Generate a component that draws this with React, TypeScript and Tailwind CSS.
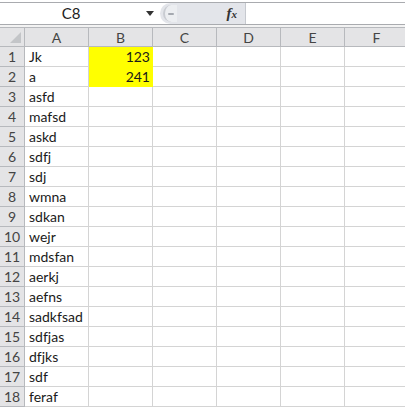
import React from 'react'

const cols = ['A', 'B', 'C', 'D', 'E', 'F']

const rows: { a: string; b?: string }[] = [
  { a: 'Jk', b: '123' },
  { a: 'a', b: '241' },
  { a: 'asfd' },
  { a: 'mafsd' },
  { a: 'askd' },
  { a: 'sdfj' },
  { a: 'sdj' },
  { a: 'wmna' },
  { a: 'sdkan' },
  { a: 'wejr' },
  { a: 'mdsfan' },
  { a: 'aerkj' },
  { a: 'aefns' },
  { a: 'sadkfsad' },
  { a: 'sdfjas' },
  { a: 'dfjks' },
  { a: 'sdf' },
  { a: 'feraf' },
]

const FormulaBar = () => (
  <div className="mt-[2px] flex h-[23px] border-t border-b border-[#a9abaf] bg-white">
    <div className="relative flex w-[160px] items-center justify-center text-[15px] text-[#222]">
      <span className="-ml-[18px]">C8</span>
      <span className="absolute right-[6px] top-[8px] h-0 w-0 border-x-[4px] border-t-[5px] border-x-transparent border-t-[#333]" />
    </div>
    <div className="flex w-[85px] items-center justify-between rounded-l-full bg-[#e3e5ea] pl-[3px] pr-[8px]">
      <span className="flex h-[17px] w-[14px] items-center rounded-l-full border-l-2 border-[#c9ccd2] bg-[#eceef1] pl-[3px]">
        <span className="h-[2px] w-[6px] rounded bg-[#a5a9b0]" />
      </span>
      <span className="font-['Liberation_Serif',serif] text-[15px] font-bold italic text-[#333]">
        f<span className="text-[11px]">x</span>
      </span>
    </div>
    <div className="flex-1 border-l border-[#c6c9cf] bg-white" />
  </div>
)

export default function App() {
  return (
    <div className="h-[409px] w-[405px] overflow-hidden bg-white font-['Lato','Open_Sans',sans-serif] [font-variant-ligatures:none]">
      <FormulaBar />
      <div className="h-[2px] bg-[#f3f3f3]" />
      <div className="grid grid-cols-[25px_repeat(6,64px)]">
        <div className="relative h-[20px] border-t border-r border-b border-[#b7b9bd] bg-[#e4e4e6]">
          <span className="absolute right-[3px] bottom-[3px] h-0 w-0 border-l-[11px] border-b-[11px] border-l-transparent border-b-[#c3c5c8]" />
        </div>
        {cols.map((c) => (
          <div
            key={c}
            className="flex h-[20px] items-center justify-center border-t border-r border-b border-[#b7b9bd] bg-[#e4e4e6] text-[14px] text-[#444]"
          >
            {c}
          </div>
        ))}
        {rows.map((r, i) => (
          <React.Fragment key={i}>
            <div className="flex h-[20px] items-center justify-center border-r border-b border-[#b7b9bd] bg-[#e4e4e6] text-[14px] text-[#444]">
              {i + 1}
            </div>
            <div className="flex h-[20px] items-center border-r border-b border-[#d4d4d4] pl-[4px] text-[14px] text-[#1a1a1a]">
              {r.a}
            </div>
            <div
              className={`flex h-[20px] items-center justify-end border-r border-b pr-[2px] text-[14px] text-[#1a1a1a] ${
                r.b ? 'border-[#ffff00] bg-[#ffff00]' : 'border-[#d4d4d4]'
              }`}
            >
              {r.b}
            </div>
            {['C', 'D', 'E', 'F'].map((c) => (
              <div key={c} className="h-[20px] border-r border-b border-[#d4d4d4]" />
            ))}
          </React.Fragment>
        ))}
      </div>
    </div>
  )
}
